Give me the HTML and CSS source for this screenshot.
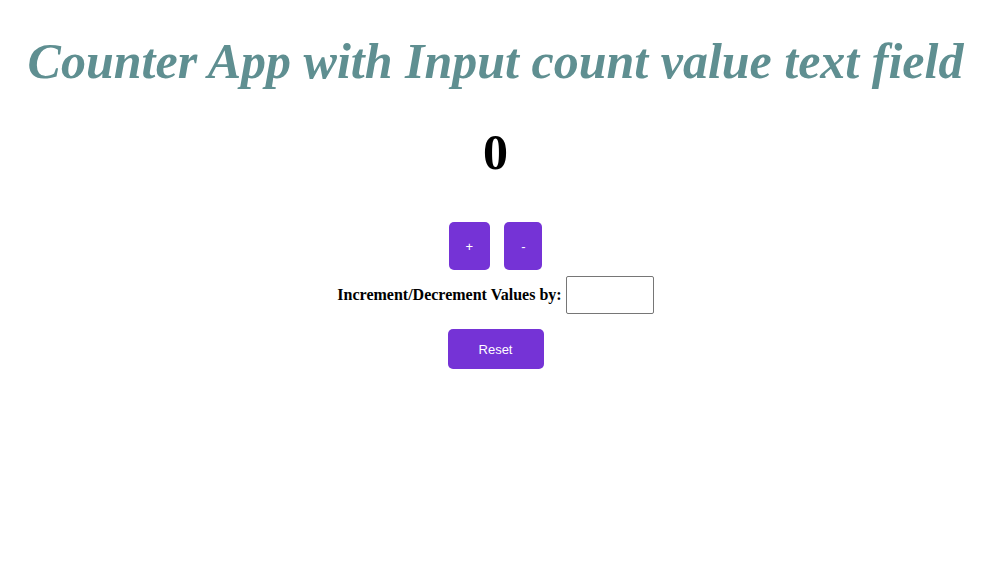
FILE: index.html
```html
<!DOCTYPE html>
<html>
<head>
<meta charset="utf-8">
<link rel="stylesheet" href="styles.css">
</head>
<body>
<div class="app">
  <h1 class="title">Counter App with Input count value text field</h1>
  <div class="count">0</div>
  <div class="controls">
    <button class="btn btn-small">+</button>
    <button class="btn btn-small">-</button>
  </div>
  <div class="step">
    <label class="step-label" for="step">Increment/Decrement Values by:</label>
    <input class="step-input" id="step" type="text">
  </div>
  <button class="btn btn-reset">Reset</button>
</div>
</body>
</html>
```
FILE: styles.css
```css
html, body {
  margin: 0;
  padding: 0;
  background: #ffffff;
}
body {
  font-family: "Liberation Serif", "Times New Roman", serif;
  color: #000;
}
.app {
  display: flex;
  flex-direction: column;
  align-items: center;
  padding-top: 31px;
  padding-right: 5px;
}
.title {
  margin: 0;
  font-size: 50px;
  font-style: italic;
  font-weight: bold;
  color: #5f8f91;
  line-height: 60px;
  white-space: nowrap;
}
.count {
  margin-top: 31px;
  font-size: 50px;
  font-weight: bold;
  line-height: 60px;
}
.controls {
  display: flex;
  gap: 14px;
  margin-top: 40px;
}
.btn {
  font-family: "Liberation Sans", Arial, sans-serif;
  font-size: 13px;
  color: #ffffff;
  background: #7533d6;
  border: none;
  border-radius: 5px;
  cursor: pointer;
}
.btn-small {
  height: 48px;
  padding: 0 17px;
}
.step {
  display: flex;
  align-items: center;
  gap: 4px;
  margin-top: 6px;
}
.step-label {
  font-size: 16px;
  font-weight: bold;
}
.step-input {
  box-sizing: border-box;
  width: 88px;
  height: 38px;
  border: 1px solid #767676;
  border-radius: 2px;
  padding: 2px 4px;
  font-size: 14px;
}
.btn-reset {
  margin-top: 15px;
  width: 96px;
  height: 40px;
}
```
